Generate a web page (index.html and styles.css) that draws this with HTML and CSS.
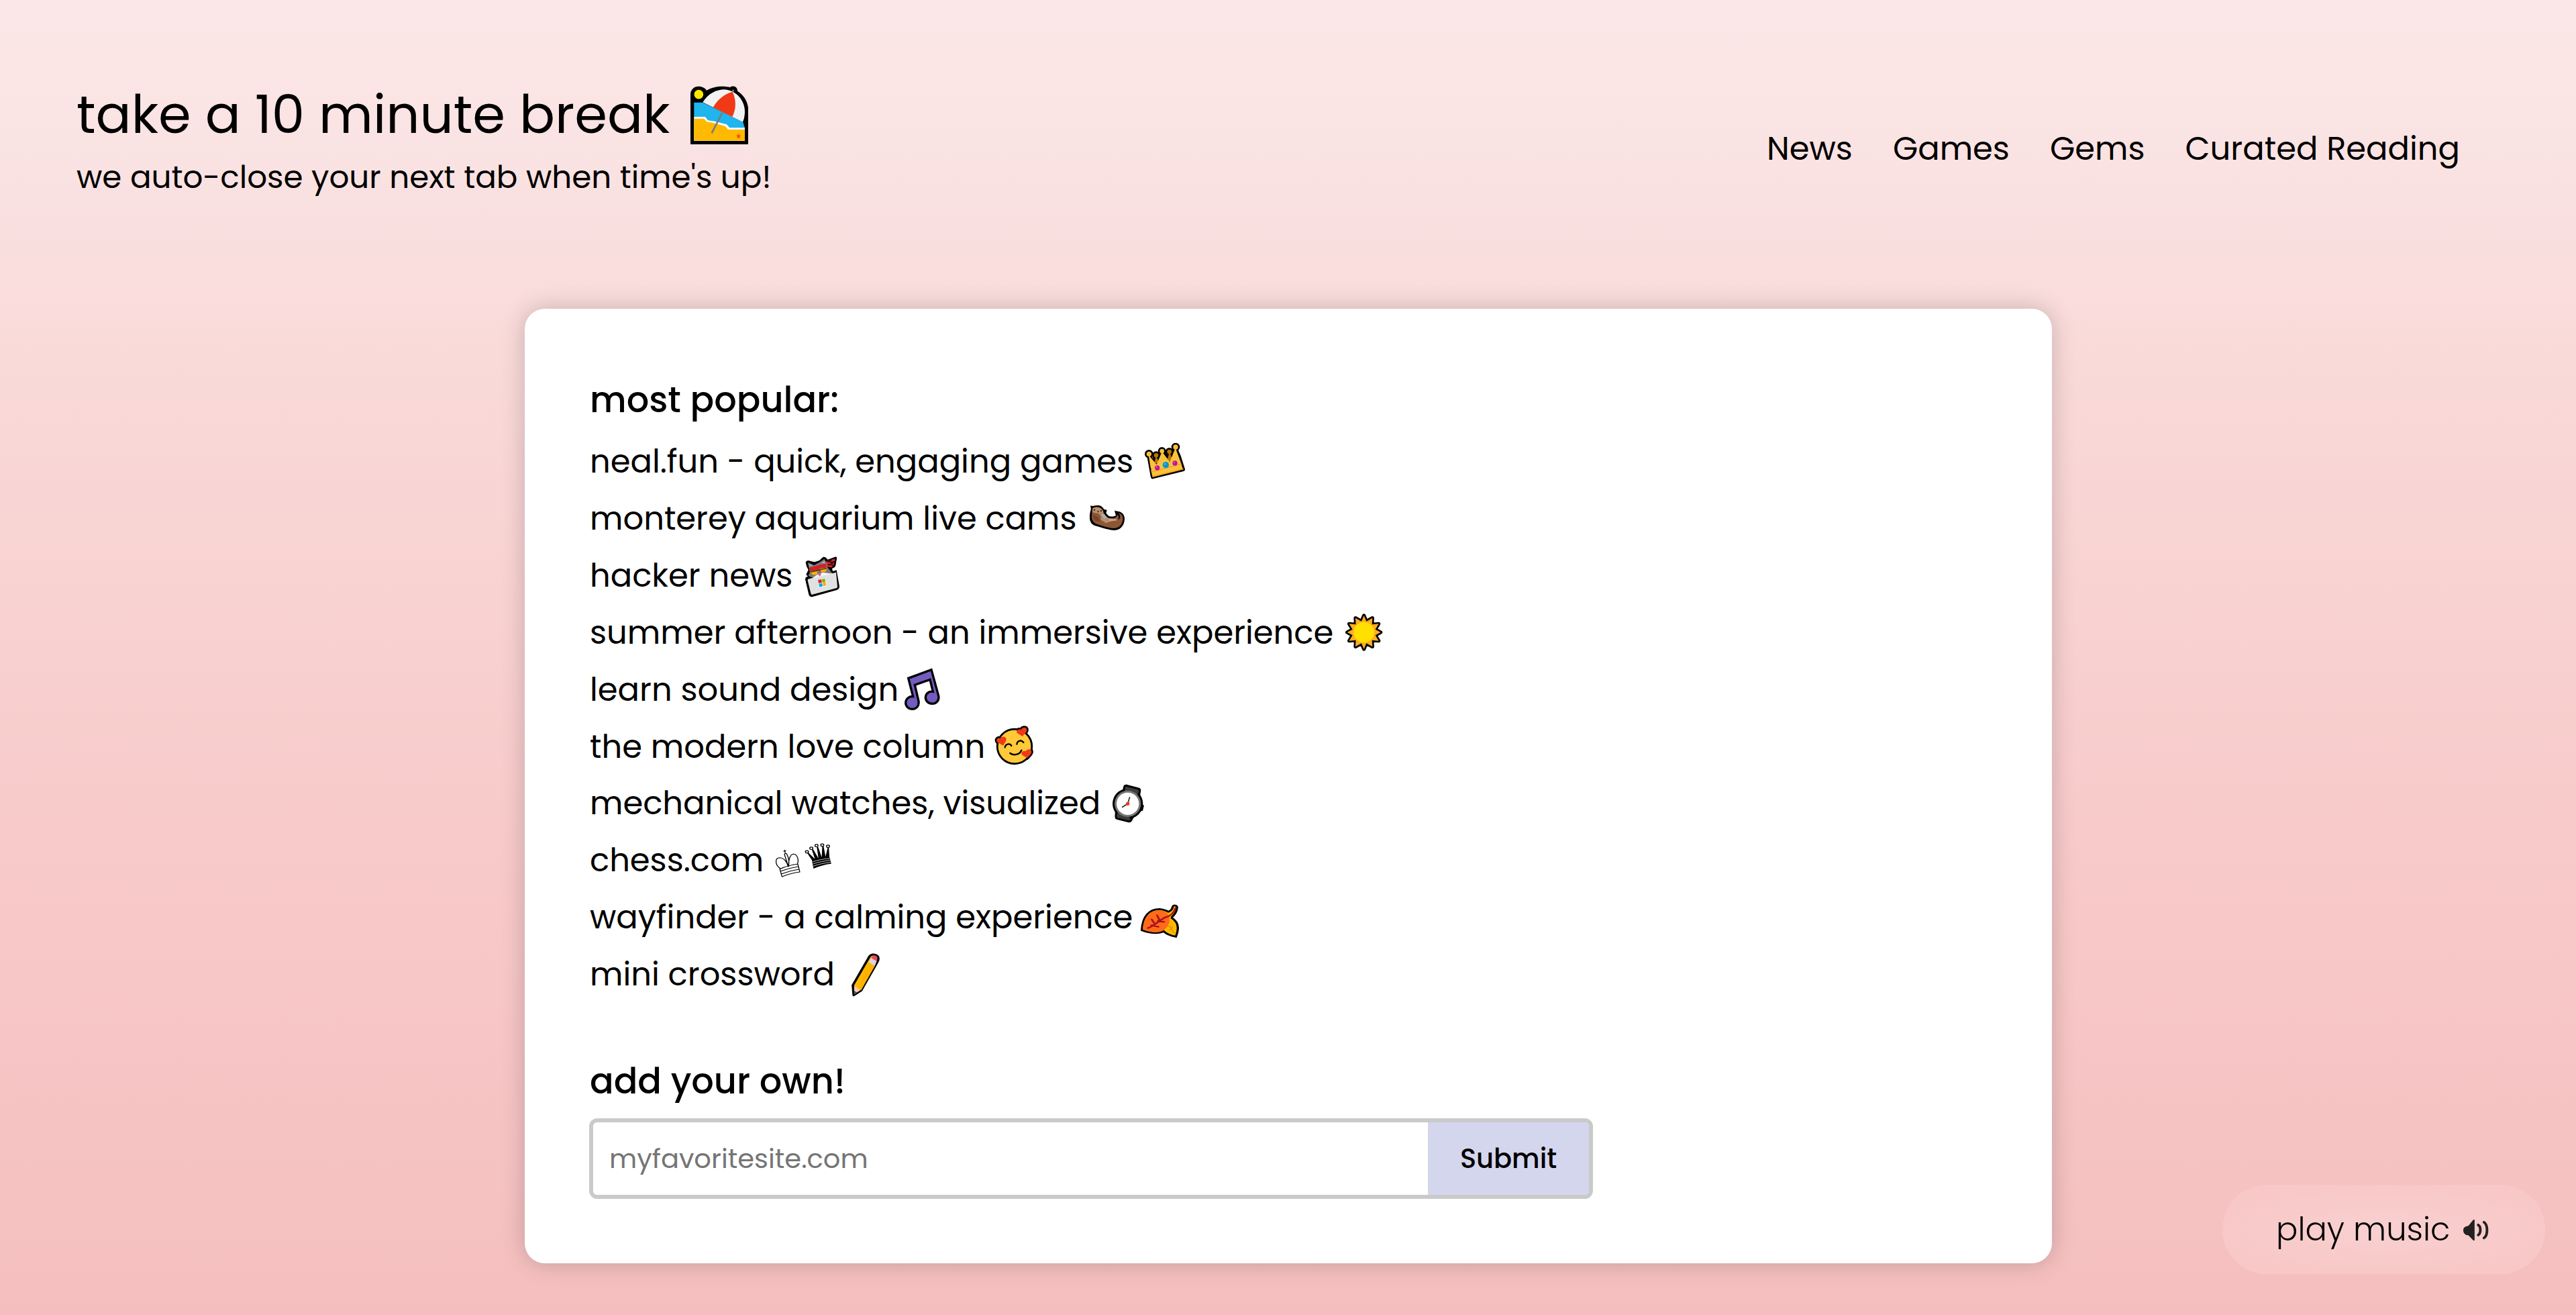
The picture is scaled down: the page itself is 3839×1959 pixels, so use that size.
FILE: index.html
```html
<!DOCTYPE html>
<html lang="en">
<head>
<meta charset="utf-8">
<title>take a 10 minute break</title>
<link rel="stylesheet" href="styles.css">
</head>
<body>
<header class="header">
  <div class="brand">
    <h1 class="title"><span>take a 10 minute break</span>
      <svg class="title-icon" viewBox="90 73 258 270">
        <path d="M90 343V120C90 98 107 84 126 84C142 84 156 91 162 102C184 89 207 84 232 84C245 84 258 86 268 88C276 81 292 82 298 94L301 106C330 124 349 155 349 195V343Z" fill="#000"/>
        <circle cx="127" cy="120" r="20.500" fill="#ffe600"/>
        <path d="M106 156H145L325 243L333 270V327H106Z" fill="#1fb5ef"/>
        <path d="M106 220H156L168 236L198 240L252 254L265 269H333V327H106Z" fill="#fff"/>
        <path d="M106 228H150L163 242L192 247L245 262L258 277H333V327H106Z" fill="#ffb900"/>
        <path d="M145 155C169 116 206 98 243 98C297 103 334 148 333 201C332 218 329 232 324 243Z" fill="#f2f2f2"/>
        <path d="M191 178C213 140 242 118 278 108C294 140 296 185 277 220Z" fill="#f03a17"/>
        <path d="M185 293L232 202M279 108L282 99" stroke="#7b7b7b" stroke-width="8" fill="none"/>
        <path d="M305 294L308 302L316 303L310 309L312 318L305 313L298 318L300 309L294 303L302 302Z" fill="#f4511e"/>
        <path d="M122 282h5M147 282h5M122 304h5M147 304h5" stroke="#ffc83d" stroke-width="4"/>
      </svg></h1>
    <p class="subtitle">we auto-close your next tab when time's up!</p>
  </div>
  <nav class="nav"><a>News</a><a>Games</a><a>Gems</a><a>Curated Reading</a></nav>
</header>

<main class="card">
  <h2 class="heading">most popular:</h2>
  <ul class="sites">
    <li><span>neal.fun - quick, engaging games</span>
      <svg class="w61" viewBox="435 24 182 234">
        <g stroke="#000" stroke-width="16" stroke-linejoin="round"><path d="M470 212L464 180L452 113L478 150L485 116L502 142L512 98L540 128L546 100L563 130L572 82L588 118L607 178Z"/><circle cx="454" cy="109" r="11"/><circle cx="486" cy="115" r="10"/><circle cx="512" cy="96" r="10"/><circle cx="545" cy="99" r="10"/><circle cx="573" cy="78" r="11"/></g>
        <path d="M478 150L485 116L502 150ZM532 146L546 100L560 138Z" fill="#b87500"/><circle cx="486" cy="115" r="10" fill="#b87500"/><circle cx="545" cy="99" r="10" fill="#b87500"/>
        <path d="M470 212L464 188L452 113L488 156L512 98L547 145L572 82L592 135L606 178Z" fill="#fcc13b"/><circle cx="454" cy="109" r="11" fill="#fcc13b"/><circle cx="512" cy="96" r="10" fill="#fcc13b"/><circle cx="573" cy="78" r="11" fill="#fcc13b"/>
        <path d="M466 189L602 153" stroke="#e39a1a" stroke-width="3"/><path d="M469 207L607 173L608 178L471 212Z" fill="#ffa51f"/>
        <circle cx="491" cy="171" r="11" fill="#bf0fa5"/><circle cx="529" cy="158" r="14" fill="#0a95c9"/><circle cx="570" cy="150" r="11" fill="#bf0fa5"/>
        <circle cx="488" cy="168" r="3" fill="#e869d3"/><circle cx="525" cy="154" r="4" fill="#3fbfe8"/><circle cx="567" cy="147" r="3" fill="#e869d3"/>
        <path d="M462 170L467 177L464 182ZM594 138L599 147L596 150Z" fill="#e0331d"/>
      </svg></li>
    <li><span>monterey aquarium live cams</span>
      <svg class="w52" viewBox="192 278 156 234">
        <path d="M195 339C205 342 214 338 230 337C244 338 251 347 256 355L269 358L265 372L275 384C285 390 297 388 309 383L303 361L318 364C335 366 347 378 348 396C348 425 332 448 302 449C278 448 252 439 214 428C197 420 190 407 192 381C193 365 199 357 197 350Z" fill="#000"/>
        <path d="M204 350C222 340 240 344 250 358L260 384L276 394C295 401 313 394 316 377L325 373C338 378 341 389 340 401C337 425 322 440 299 440C272 438 240 427 217 418C205 411 200 397 201 383Z" fill="#8b5737"/>
        <path d="M205 352C222 340 243 346 252 363L253 378L225 373L205 369Z" fill="#b8906f"/>
        <path d="M232 374L254 377L273 392L285 409L264 417L241 402L242 386Z" fill="#b8906f"/><path d="M273 395L311 399L314 405L282 409Z" fill="#c9a285"/>
        <path d="M244 377L258 376L266 391L256 397Z" fill="#a5b8c2"/>
        <path d="M316 375C326 380 329 393 322 402" fill="none" stroke="#000" stroke-width="8"/><path d="M318 402C330 398 332 385 325 374C342 381 342 403 334 416Z" fill="#8b5737"/>
        <circle cx="213" cy="358" r="3"/><circle cx="243" cy="362" r="3"/><path d="M224 363L235 362L230 370Z" fill="#542d20"/>
        <path d="M202 378L228 390L239 409L216 407Z" fill="#754327"/>
      </svg></li>
    <li><span>hacker news</span>
      <svg class="w51" viewBox="64 23 152 234">
        <path d="M66 82C70 73 77 72 86 76L106 81L127 74L143 59C152 56 160 62 164 70L201 57L206 61L201 90C200 103 193 108 184 109L187 122L204 117L217 190C217 200 211 204 205 206L97 236C88 238 83 234 80 226L64 158C64 150 69 146 76 145L68 137L78 116L70 100Z" fill="#000"/>
        <path d="M75 82L104 95L126 83L149 67L161 86L164 105L188 135L182 140L95 150L78 142L85 124Z" fill="#777"/>
        <path d="M82 88L98 96L84 102ZM136 85L150 75L154 89Z" fill="#b7a6a1"/>
        <path d="M81 107L155 87L158 105L84 124Z" fill="#d51f26"/><path d="M159 77L197 66L196 76L171 83L180 86L195 82L190 95L178 97L188 101L183 105L162 102Z" fill="#e42228"/><path d="M164 80L182 74M166 94L188 89" stroke="#000" stroke-width="4"/>
        <path d="M87 121L116 116L119 133C111 141 98 140 92 133ZM128 110L157 106L160 119C152 128 139 127 133 121Z" fill="#ffb000"/><path d="M87 121L158 106L159 112L136 116L130 121L122 119L116 122L88 128Z" fill="#60401a"/>
        <path d="M76 157L202 127L208 190C208 195 205 197 202 198L96 226C92 227 90 224 89 220L75 164Z" fill="#e1e1e3"/>
        <path d="M93 154L122 134L143 127L186 133Z" fill="#f4f4f4"/><path d="M119 134L136 130L130 146Z" fill="#d85b83"/>
        <path d="M121 161L155 154L161 188L127 197Z" fill="#fafafa"/><path d="M121 161L136 158L139 173L124 176Z" fill="#d3272b"/><path d="M138 158L152 155L155 170L141 173Z" fill="#86b300"/><path d="M125 178L139 175L143 189L128 193Z" fill="#00a7e6"/><path d="M142 174L155 171L158 185L145 189Z" fill="#f5aa00"/>
      </svg></li>
    <li><span>summer afternoon - an immersive experience</span>
      <svg class="w55" viewBox="76 37 166 234">
        <path d="M159 79L170 105L197 90L195 119L225 116L210 141L234 154L210 167L225 192L195 189L197 218L170 203L159 229L148 203L121 218L123 189L93 192L108 167L84 154L108 141L93 116L123 119L121 90L148 105Z" fill="#ffad1f" stroke="#000" stroke-width="16" stroke-linejoin="round"/>
        <path d="M159 79L170 105L197 90L195 119L225 116L210 141L234 154L210 167L225 192L195 189L197 218L170 203L159 229L148 203L121 218L123 189L93 192L108 167L84 154L108 141L93 116L123 119L121 90L148 105Z" fill="#ffad1f"/>
        <circle cx="159" cy="154" r="46" fill="#ffe000"/>
      </svg></li>
    <li><span>learn sound design</span>
      <svg class="w53" viewBox="505 532 158 234">
        <path d="M522 599L625 561L656 674C663 697 648 713 629 713C611 713 598 700 599 684C600 668 614 656 632 659L619 605L551 629L568 702C571 724 557 737 540 737C523 737 510 725 510 708C511 691 526 678 543 681Z" fill="#735bc0" stroke="#000" stroke-width="10"/>
      </svg></li>
    <li><span>the modern love column</span>
      <svg class="w58" viewBox="69 36 174 234">
        <circle cx="159" cy="153" r="77" fill="#ffc938" stroke="#000" stroke-width="9"/>
        <g stroke="#000" stroke-width="15" stroke-linejoin="round"><path d="M108 149L82 134C73 121 84 111 97 117C103 105 122 108 122 121C122 130 115 137 108 149ZM194 108L170 93C165 81 176 74 189 78C193 65 212 65 214 78C215 89 205 95 194 108ZM215 205L191 190C186 177 198 170 210 174C216 161 235 164 235 177C235 188 225 193 215 205Z"/></g>
        <circle cx="159" cy="153" r="73" fill="#ffc938"/>
        <path d="M108 149L82 134C73 121 84 111 97 117C103 105 122 108 122 121C122 130 115 137 108 149ZM194 108L170 93C165 81 176 74 189 78C193 65 212 65 214 78C215 89 205 95 194 108ZM215 205L191 190C186 177 198 170 210 174C216 161 235 164 235 177C235 188 225 193 215 205Z" fill="#f03a17"/>
        <path d="M116 157C119 140 138 138 145 150M169 143C172 126 190 123 199 135M139 183C154 195 181 191 190 170" fill="none" stroke="#000" stroke-width="7" stroke-linecap="round"/>
      </svg></li>
    <li><span>mechanical watches, visualized</span>
      <svg class="w47" viewBox="593 291 140 234">
        <path d="M642 357L646 335C648 331 652 330 657 331L709 345C715 347 716 351 715 355L711 378M609 448L608 470C608 475 611 478 615 479L663 491C670 492 674 490 676 486L686 466" fill="#3d3d3d" stroke="#000" stroke-width="9" stroke-linejoin="round"/>
        <path d="M718 417L730 421L725 441L712 440Z" fill="#888" stroke="#000" stroke-width="7" stroke-linejoin="round"/>
        <circle cx="661" cy="412" r="68" fill="#000"/>
        <path d="M647 352L652 338L708 352L706 372ZM614 452L613 470L664 484L672 472Z" fill="#3d3d3d"/>
        <circle cx="661" cy="412" r="59" fill="#767676"/><circle cx="661" cy="412" r="50" fill="#fff"/>
        <path d="M635 428L661 412L670 382" fill="none" stroke="#333" stroke-width="5"/><circle cx="661" cy="412" r="8" fill="#f03a17"/>
      </svg></li>
    <li><span>chess.com</span>
      <svg class="w83" viewBox="40 35 204 234" preserveAspectRatio="none">
        <g fill="none" stroke="#000" stroke-width="3.200" stroke-linejoin="round">
          <path d="M55 193C73 183 99 174 121 171L128 206C103 210 84 217 63 227ZM57 203C78 193 100 186 123 182M60 215C81 205 103 198 125 194"/>
          <path d="M57 191C35 172 38 143 54 142C70 143 82 161 86 183M119 171C125 156 121 128 105 126C91 127 86 157 88 182M86 180L72 128L75 122L80 125C89 144 90 160 87 182M72 107L75 121M68 114L78 111"/>
        </g>
        <path d="M172 153L155 121L159 119L183 148L172 106L177 105L196 145L190 94L195 94L208 141L210 92L215 92L222 138L230 96L234 97L236 138L243 169C220 172 199 180 178 191Z"/>
        <g fill="#fff" stroke="#000" stroke-width="3.500"><circle cx="154" cy="116" r="5.500"/><circle cx="170" cy="100" r="5.500"/><circle cx="189" cy="88" r="5.500"/><circle cx="210" cy="86" r="5.500"/><circle cx="231" cy="91" r="5.500"/></g>
        <path d="M174 161C194 153 216 147 237 146M176 170C196 162 218 156 239 154M177 180C198 171 219 165 241 163" fill="none" stroke="#fff" stroke-width="2"/>
      </svg></li>
    <li><span>wayfinder - a calming experience</span>
      <svg class="w57" viewBox="1372 290 140 234" preserveAspectRatio="none">
        <path d="M1376 466C1379 401 1405 371 1442 372C1455 374 1466 378 1473 384C1485 379 1488 371 1489 361C1492 352 1506 355 1505 366C1504 385 1495 398 1486 408L1486 412C1507 427 1515 453 1501 495C1484 491 1466 484 1456 471C1437 483 1408 480 1376 466Z" fill="#ffb900" stroke="#000" stroke-width="8"/>
        <path d="M1379 463C1382 401 1410 377 1442 378C1468 381 1478 399 1478 421C1477 452 1452 477 1424 476C1409 475 1394 470 1379 463Z" fill="#ff6b18"/>
        <path d="M1398 457C1425 446 1442 419 1462 409C1484 402 1495 384 1499 367M1412 418L1423 437M1432 400L1442 424M1411 444L1437 451M1435 425L1458 429" fill="none" stroke="#a9101f" stroke-width="7" stroke-linecap="round"/>
        <path d="M1494 480L1478 447M1474 463L1486 464M1489 448L1484 461M1471 448L1479 451" fill="none" stroke="#d38b00" stroke-width="3"/>
      </svg></li>
    <li><span>mini crossword</span>
      <svg class="w42" viewBox="315 544 102 234" preserveAspectRatio="none">
        <path d="M320 711L380 584C386 573 398 571 407 578C416 586 414 597 409 608L350 735L323 756Z" fill="#ffb900" stroke="#000" stroke-width="9" stroke-linejoin="round"/>
        <path d="M387 589C392 577 402 576 408 584C411 591 409 600 406 607Z" fill="#e84a5f"/><path d="M386 589L407 604L400 626L378 609Z" fill="#d9d5dc"/>
        <path d="M325 715L349 732L325 751Z" fill="#f6ccb4"/><path d="M324 735L336 744L324 754Z" fill="#555"/><path d="M378 609L400 626L350 734L337 724Z" fill="#ffb100"/>
      </svg></li>
  </ul>
  <h2 class="heading heading-add">add your own!</h2>
  <form class="form">
    <input class="field" type="text" placeholder="myfavoritesite.com">
    <button class="submit" type="button">Submit</button>
  </form>
</main>

<button class="music" type="button"><span>play music</span>
  <svg viewBox="0 0 106 91" width="38" height="31" preserveAspectRatio="none">
    <path d="M47 0V91H42L21 68C8 68 0 58 0 46C0 33 9 29 21 27L42 0Z" fill="#222220"/>
    <path d="M62 23C74 30 74 60 62 67M86 11C103 22 103 69 86 80" fill="none" stroke="#222220" stroke-width="11" stroke-linecap="round"/>
  </svg>
</button>
</body>
</html>
```
FILE: styles.css
```css
* { box-sizing: border-box; }

html { height: 100%; }

body {
  margin: 0;
  height: 1959px;
  overflow: hidden;
  background: linear-gradient(#fbe7e7 0%, #fae2e2 13%, #f9dbda 25%, #f8d2d1 45%, #f8c9c9 66%, #f6c3c3 86%, #f5bebe 100%);
  color: #000;
  font-family: Poppins, Inter, sans-serif;
  font-size: 48px;
}

h1, h2, p, ul { margin: 0; padding: 0; }

.header {
  display: flex;
  justify-content: space-between;
  align-items: flex-start;
  height: 460px;
  padding: 111px 173px 0 114px;
  white-space: nowrap;
}

.title {
  display: flex;
  align-items: center;
  gap: 31px;
  height: 117px;
  font-size: 78.5px;
  font-weight: 400;
}

.title span { padding-top: 2px; }

.title-icon { width: 86px; height: 90px; }

.subtitle {
  font-size: 46.8px;
  line-height: 72px;
}

.nav {
  display: flex;
  gap: 60px;
  padding-top: 81px;
  line-height: 60px;
}

.card {
  width: 2276px;
  height: 1422px;
  margin: 0 auto 0 782px;
  padding: 87px 96px 0 97px;
  border-radius: 30px;
  background: #fff;
  box-shadow: 0 0 36px rgba(0, 0, 0, 0.2);
}

.heading {
  font-size: 52.6px;
  font-weight: 500;
  line-height: 98px;
}

.heading-add { margin-top: 69px; }

.sites { list-style: none; }

.sites li {
  display: flex;
  align-items: center;
  gap: 15px;
  height: 84.83px;
  white-space: nowrap;
}

.sites li span { padding-top: 2px; }

.sites svg { height: 78px; }

.w42 { width: 41.6px; }
.w47 { width: 46.7px; }
.w51 { width: 50.7px; }
.w52 { width: 52px; }
.w53 { width: 52.7px; }
.w55 { width: 55.3px; }
.w57 { width: 57px; }
.w58 { width: 58px; }
.w61 { width: 60.7px; }
.w83 { width: 83.3px; }

.sites li:nth-child(1) { gap: 17px; }
.sites li:nth-child(2) { gap: 19px; }
.sites li:nth-child(3) { gap: 19px; }
.sites li:nth-child(4) { gap: 18px; }
.sites li:nth-child(5) { gap: 9px; }
.sites li:nth-child(6) { gap: 14px; }
.sites li:nth-child(7) { gap: 18px; }
.sites li:nth-child(8) { gap: 18px; }
.sites li:nth-child(9) { gap: 12px; }
.sites li:nth-child(10) { gap: 25px; }

.form {
  display: flex;
  width: 1496px;
  height: 120px;
  margin: 6px 0 0 -1px;
  border: 6px solid #cacaca;
  border-radius: 12px;
  overflow: hidden;
}

.field {
  flex: 1;
  min-width: 0;
  padding: 0 24px;
  border: 0;
  background: #fff;
  font: inherit;
  font-size: 40px;
}

.field::placeholder { color: #757575; opacity: 1; }

.submit {
  width: 240px;
  padding: 0;
  border: 0;
  background: #d4d6ee;
  color: #000;
  font: inherit;
  font-size: 40px;
  font-weight: 500;
}

.music {
  position: fixed;
  right: 46px;
  bottom: 61px;
  display: flex;
  align-items: center;
  gap: 20px;
  width: 481px;
  height: 133px;
  padding: 1px 0 0 80px;
  border: 0;
  border-radius: 68px;
  background: radial-gradient(closest-side, #f9d0d0, #f8c8c8);
  color: #000;
  font: inherit;
  font-weight: 300;
}
```
